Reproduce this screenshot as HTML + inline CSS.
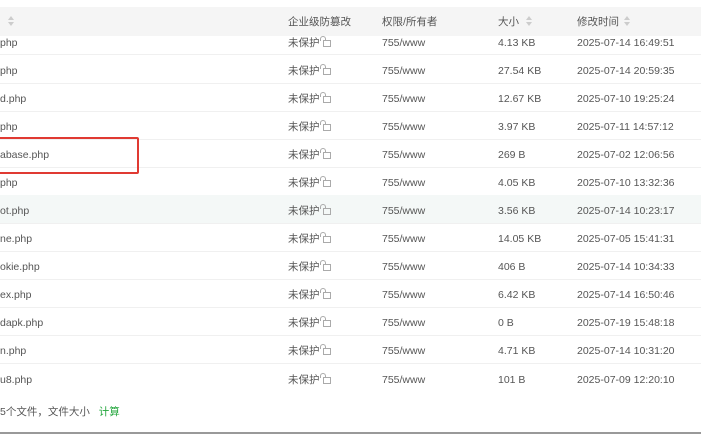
<!DOCTYPE html>
<html><head><meta charset="utf-8"><style>
body{margin:0;width:701px;height:434px;overflow:hidden;background:#fff;font-family:"Liberation Sans","Noto Sans CJK SC",sans-serif;font-size:10.5px;color:#555;position:relative}
.hdr{position:absolute;left:0;top:7px;width:701px;height:29px;background:#f5f5f5}
.t{position:absolute;white-space:nowrap;line-height:12px;margin-top:2px}
.row{position:absolute;left:0;width:701px;height:28px;border-bottom:1px solid #f0f0f0}
.sort{position:absolute;width:6px;height:10px}
.sort:before,.sort:after{content:"";position:absolute;left:0;border-left:3px solid transparent;border-right:3px solid transparent}
.sort:before{top:0;border-bottom:4px solid #ccc}
.sort:after{top:6px;border-top:4px solid #ccc}
.lk{display:inline-block;width:6px;height:5px;border:1px solid #aaa;margin-left:3px;position:relative;top:1px}
.lk:before{content:"";position:absolute;left:-4px;top:-5px;width:4px;height:4px;border:1px solid #aaa;border-bottom:none;border-radius:3px 3px 0 0}
</style></head><body>
<div class="hdr"></div>
<div class="sort" style="left:8px;top:16px"></div>
<div class="t" style="left:288px;top:14px">企业级防篡改</div>
<div class="t" style="left:382px;top:14px">权限/所有者</div>
<div class="t" style="left:498px;top:14px">大小</div>
<div class="sort" style="left:526px;top:16px"></div>
<div class="t" style="left:577px;top:14px">修改时间</div>
<div class="sort" style="left:624px;top:16px"></div>

<div class="row" style="top:55px"></div>
<div class="row" style="top:83px"></div>
<div class="row" style="top:111px"></div>
<div class="row" style="top:139px"></div>
<div class="row" style="top:167px"></div>
<div class="row" style="top:195px;background:#f4f8f7"></div>
<div class="row" style="top:223px"></div>
<div class="row" style="top:251px"></div>
<div class="row" style="top:279px"></div>
<div class="row" style="top:307px"></div>
<div class="row" style="top:335px"></div>
<div class="row" style="top:27px;height:27px"></div>

<div style="position:absolute;left:-3px;top:137px;width:138px;height:33px;border:2px solid #e03a32;border-radius:2px"></div>

<div class="t" style="left:0;top:35px">php</div>
<div class="t" style="left:0;top:63px">php</div>
<div class="t" style="left:0;top:91px">d.php</div>
<div class="t" style="left:0;top:119px">php</div>
<div class="t" style="left:0;top:147px">abase.php</div>
<div class="t" style="left:0;top:175px">php</div>
<div class="t" style="left:0;top:203px">ot.php</div>
<div class="t" style="left:0;top:231px">ne.php</div>
<div class="t" style="left:0;top:259px">okie.php</div>
<div class="t" style="left:0;top:287px">ex.php</div>
<div class="t" style="left:0;top:315px">dapk.php</div>
<div class="t" style="left:0;top:343px">n.php</div>
<div class="t" style="left:0;top:372px">u8.php</div>

<div class="t" style="left:288px;top:35px">未保护<span class="lk"></span></div>
<div class="t" style="left:288px;top:63px">未保护<span class="lk"></span></div>
<div class="t" style="left:288px;top:91px">未保护<span class="lk"></span></div>
<div class="t" style="left:288px;top:119px">未保护<span class="lk"></span></div>
<div class="t" style="left:288px;top:147px">未保护<span class="lk"></span></div>
<div class="t" style="left:288px;top:175px">未保护<span class="lk"></span></div>
<div class="t" style="left:288px;top:203px">未保护<span class="lk"></span></div>
<div class="t" style="left:288px;top:231px">未保护<span class="lk"></span></div>
<div class="t" style="left:288px;top:259px">未保护<span class="lk"></span></div>
<div class="t" style="left:288px;top:287px">未保护<span class="lk"></span></div>
<div class="t" style="left:288px;top:315px">未保护<span class="lk"></span></div>
<div class="t" style="left:288px;top:343px">未保护<span class="lk"></span></div>
<div class="t" style="left:288px;top:372px">未保护<span class="lk"></span></div>

<div class="t" style="left:382px;top:35px">755/www</div>
<div class="t" style="left:382px;top:63px">755/www</div>
<div class="t" style="left:382px;top:91px">755/www</div>
<div class="t" style="left:382px;top:119px">755/www</div>
<div class="t" style="left:382px;top:147px">755/www</div>
<div class="t" style="left:382px;top:175px">755/www</div>
<div class="t" style="left:382px;top:203px">755/www</div>
<div class="t" style="left:382px;top:231px">755/www</div>
<div class="t" style="left:382px;top:259px">755/www</div>
<div class="t" style="left:382px;top:287px">755/www</div>
<div class="t" style="left:382px;top:315px">755/www</div>
<div class="t" style="left:382px;top:343px">755/www</div>
<div class="t" style="left:382px;top:372px">755/www</div>

<div class="t" style="left:498px;top:35px">4.13 KB</div>
<div class="t" style="left:498px;top:63px">27.54 KB</div>
<div class="t" style="left:498px;top:91px">12.67 KB</div>
<div class="t" style="left:498px;top:119px">3.97 KB</div>
<div class="t" style="left:498px;top:147px">269 B</div>
<div class="t" style="left:498px;top:175px">4.05 KB</div>
<div class="t" style="left:498px;top:203px">3.56 KB</div>
<div class="t" style="left:498px;top:231px">14.05 KB</div>
<div class="t" style="left:498px;top:259px">406 B</div>
<div class="t" style="left:498px;top:287px">6.42 KB</div>
<div class="t" style="left:498px;top:315px">0 B</div>
<div class="t" style="left:498px;top:343px">4.71 KB</div>
<div class="t" style="left:498px;top:372px">101 B</div>

<div class="t" style="left:577px;top:35px">2025-07-14 16:49:51</div>
<div class="t" style="left:577px;top:63px">2025-07-14 20:59:35</div>
<div class="t" style="left:577px;top:91px">2025-07-10 19:25:24</div>
<div class="t" style="left:577px;top:119px">2025-07-11 14:57:12</div>
<div class="t" style="left:577px;top:147px">2025-07-02 12:06:56</div>
<div class="t" style="left:577px;top:175px">2025-07-10 13:32:36</div>
<div class="t" style="left:577px;top:203px">2025-07-14 10:23:17</div>
<div class="t" style="left:577px;top:231px">2025-07-05 15:41:31</div>
<div class="t" style="left:577px;top:259px">2025-07-14 10:34:33</div>
<div class="t" style="left:577px;top:287px">2025-07-14 16:50:46</div>
<div class="t" style="left:577px;top:315px">2025-07-19 15:48:18</div>
<div class="t" style="left:577px;top:343px">2025-07-14 10:31:20</div>
<div class="t" style="left:577px;top:372px">2025-07-09 12:20:10</div>

<div class="t" style="left:0;top:404px">5个文件，文件大小 <span style="color:#20a53a;margin-left:6px">计算</span></div>
<div style="position:absolute;left:0;top:432px;width:701px;height:2px;background:#999"></div>
</body></html>
